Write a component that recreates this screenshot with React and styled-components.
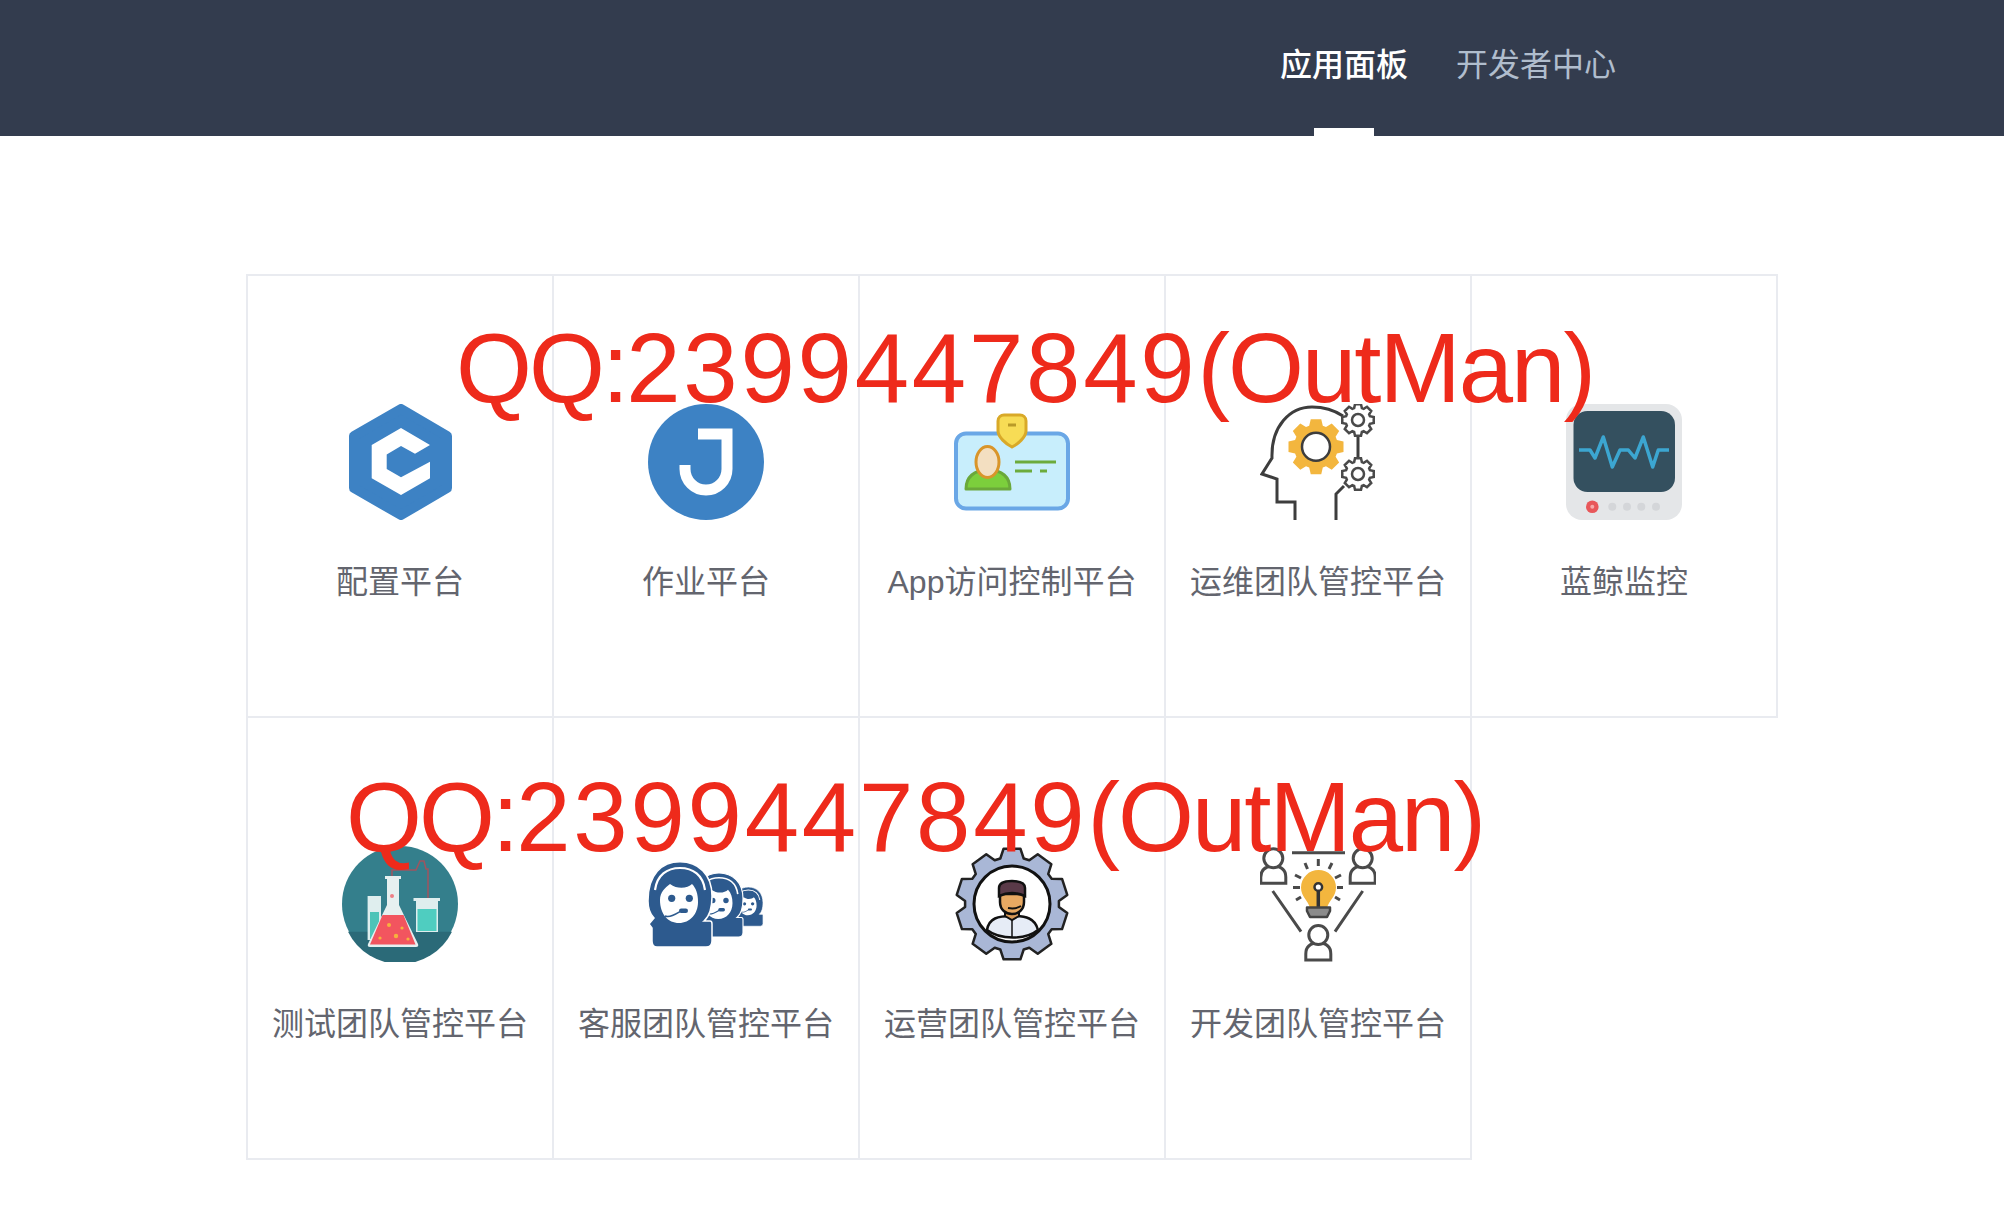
import React from "react";
import styled, { createGlobalStyle } from "styled-components";

const GlobalStyle = createGlobalStyle`
  html, body {
    margin: 0;
    padding: 0;
    background: #fff;
    font-family: "Liberation Sans", "Noto Sans CJK SC", sans-serif;
  }
`;

// builds a cog outline, used by several of the app icons
const gearPath = (cx, cy, outer, inner, teeth) => {
  const pts = [];
  const step = (Math.PI * 2) / teeth;
  for (let i = 0; i < teeth; i++) {
    const a = i * step - Math.PI / 2;
    [
      [-0.5, inner],
      [-0.3, outer],
      [0.3, outer],
      [0.5, inner],
    ].forEach(([off, r]) => {
      const t = a + off * step * 0.8;
      pts.push(`${(cx + Math.cos(t) * r).toFixed(2)} ${(cy + Math.sin(t) * r).toFixed(2)}`);
    });
  }
  return `M${pts.join("L")}Z`;
};

const Svg = ({ children }) => (
  <IconSvg viewBox="0 0 116 116" aria-hidden="true">
    {children}
  </IconSvg>
);

const ConfigIcon = () => (
  <Svg>
    <polygon
      points="59,5 105,32 105,84 59,111 12,84 12,32"
      fill="#3d82c4"
      stroke="#3d82c4"
      strokeWidth="10"
      strokeLinejoin="round"
    />
    <polygon
      points="59,24 88,41 73,49.7 59,42 44.7,50.5 44.7,65 59,73.3 88,57.7 88,74.3 59,91 29.7,74.3 29.7,41"
      fill="#fff"
    />
  </Svg>
);

const JobIcon = () => (
  <Svg>
    <circle cx="58" cy="58" r="58" fill="#3d82c4" />
    <path d="M50 30H79V65a21 21 0 0 1-42 0V61" fill="none" stroke="#fff" strokeWidth="11" />
  </Svg>
);

const CardIcon = () => (
  <Svg>
    <rect x="2" y="29.5" width="112" height="75" rx="10" fill="#c8eefc" stroke="#6aa7e6" strokeWidth="4" />
    <path
      d="M44 17c0-4 3-6 6-6h16c3 0 6 2 6 6v10c0 6-8 13-14 16-6-3-14-10-14-16z"
      fill="#f7dc55"
      stroke="#d9a928"
      strokeWidth="3"
    />
    <path d="M54 21h8" stroke="#b99a28" strokeWidth="3" />
    <path d="M12 85c0-12 8-19 22-19s22 7 22 19z" fill="#7ccf3c" stroke="#6aa83a" strokeWidth="3" strokeLinejoin="round" />
    <ellipse cx="33.5" cy="58" rx="11.5" ry="15.5" fill="#f3dfc1" stroke="#d9952a" strokeWidth="3" />
    <path d="M61 58h41M61 67h17M86 67h7" stroke="#6cab3c" strokeWidth="3" fill="none" />
  </Svg>
);

const OpsIcon = () => (
  <Svg>
    <path d={gearPath(56, 42.7, 28, 22, 8)} fill="#f3b63e" />
    <circle cx="56" cy="42.7" r="14" fill="#fff" stroke="#3d3d3d" strokeWidth="2.5" />
    <path
      d="M35 116V98H17V75L2 70 12 54C11 22 30 3 52 3c12 0 22 3 31 9M76 116V90l8-8"
      fill="none"
      stroke="#3d3d3d"
      strokeWidth="3"
    />
    <path d="M98 31V56" stroke="#3d3d3d" strokeWidth="3" />
    {[16, 70].map(cy => (
      <g key={cy}>
        <path d={gearPath(98, cy, 16, 12.5, 8)} fill="#fff" stroke="#4a4a4a" strokeWidth="2.5" />
        <circle cx="98" cy={cy} r="6" fill="#fff" stroke="#4a4a4a" strokeWidth="2.5" />
      </g>
    ))}
  </Svg>
);

const MonitorIcon = () => (
  <Svg>
    <rect width="116" height="116" rx="16" fill="#e4e6e8" />
    <rect x="7.5" y="7" width="101.5" height="81" rx="14" fill="#34505f" />
    <polyline
      points="13,46 24,46 29,54 37.3,33 46.3,63 54,46 62.3,46 69,54 77.3,33 86.7,63 92.3,46 103,46"
      fill="none"
      stroke="#3ca6d1"
      strokeWidth="3.5"
      strokeLinejoin="round"
    />
    <circle cx="26.3" cy="102.7" r="6.3" fill="#e8575a" />
    <circle cx="26.3" cy="102.7" r="2" fill="#f6a9a9" />
    {[46.3, 61, 75.3, 90].map(cx => (
      <circle key={cx} cx={cx} cy="102.7" r="4" fill="#d4d6d9" />
    ))}
  </Svg>
);

const FlaskIcon = () => (
  <Svg>
    <circle cx="58" cy="58" r="58" fill="#347f8c" />
    <path d="M6 85.7H110A58 58 0 0 1 6 85.7Z" fill="#2b6a78" />
    <path d="M50 30V24H74L78 15H82L84 23H86V54" fill="none" stroke="#a0545f" strokeWidth="1.5" />
    <rect x="25.6" y="50" width="13.4" height="44" fill="#dfeeee" />
    <rect x="28" y="66" width="9" height="27" fill="#4ec4b8" />
    <path d="M71.5 52H98V55H96V86H74V55H71.5Z" fill="#dfeeee" />
    <rect x="75.5" y="63" width="19" height="22" fill="#4fcdc0" />
    <path d="M43 30H59V33H57V59L76 98Q77 101 74 101H28Q25 101 26 98L45 59V33H43Z" fill="#e6f0f0" />
    <path d="M40.5 69H61.5L73.5 98.5H28Z" fill="#f2555f" />
    <g fill="#f7b13d">
      <circle cx="47" cy="79" r="2" />
      <circle cx="60" cy="82" r="1.6" />
      <circle cx="54" cy="90" r="2.2" />
      <circle cx="38" cy="92" r="1.6" />
      <circle cx="66" cy="93" r="1.6" />
    </g>
    <circle cx="50" cy="50" r="2" fill="#ee7f86" />
  </Svg>
);

const Agent = ({ transform }) => (
  <g transform={transform}>
    <path
      d="M0 55C0 28 14 15.7 32 15.7S64 28 64 50C64 60 62 70 56 75H62Q64 75 64 78V95Q64 101 58 101H9Q4 101 4 95V82L1 78 6 72C2 68 0 62 0 55Z"
      fill="#2d5a8e"
      stroke="#fff"
      strokeWidth="1.5"
    />
    <path d="M7 44C9 29 19 22 32 22S55 29 57 44" fill="none" stroke="#fff" strokeWidth="2.2" />
    <path d="M12 54C12 46 17 42 22 38 30 44 40 42 44 38 48 42 50 48 50 56 50 68 42 77 31 77S12 68 12 54Z" fill="#fff" />
    <circle cx="23.7" cy="52.3" r="3.6" fill="#2d5a8e" />
    <circle cx="41.3" cy="52.3" r="3.6" fill="#2d5a8e" />
    <path d="M17 70C22 72 28 68 33 65" fill="none" stroke="#2d5a8e" strokeWidth="1.6" />
    <rect x="31" y="62.5" width="9" height="4.5" rx="2.2" fill="#2d5a8e" />
  </g>
);

const ServiceIcon = () => (
  <Svg>
    <Agent transform="translate(85.6 33.8) scale(0.46)" />
    <Agent transform="translate(47 15.2) scale(0.75)" />
    <Agent />
  </Svg>
);

const OperationsIcon = () => (
  <Svg>
    <path d={gearPath(58, 58, 56, 47, 10)} fill="#a9b7d6" stroke="#222" strokeWidth="2.5" strokeLinejoin="round" />
    <circle cx="58" cy="58" r="38" fill="#fff" stroke="#111" strokeWidth="3" />
    <path d="M33 84C35 72 44 70 58 70S81 72 84 84C72 94 46 94 33 84Z" fill="#e6ecf6" stroke="#111" strokeWidth="2.5" />
    <path d="M58 72V92" stroke="#111" strokeWidth="1.5" />
    <path d="M51 62V70L58 74 65 70V62Z" fill="#d99a58" stroke="#111" strokeWidth="2" />
    <path d="M46 48V56C46 64 52 68 58 68S70 64 70 56V48Z" fill="#e8a962" stroke="#111" strokeWidth="2.5" />
    <path d="M45 50V42C45 37 50 35 58 35S71 37 71 42V50C62 46 54 46 45 50Z" fill="#5a3a48" stroke="#111" strokeWidth="2.5" />
    <path d="M54 62C60 63 64 62 67 60" fill="none" stroke="#111" strokeWidth="2" />
  </Svg>
);

const Member = ({ x, y }) => (
  <g transform={`translate(${x} ${y})`} fill="#fff" stroke="#4a4a4a" strokeWidth="3">
    <path d="M-12.5 25V19C-12.5 11-7 8 0 8S12.5 11 12.5 19V25Z" />
    <circle cx="0" cy="0" r="9.5" />
  </g>
);

const rays = [
  [58.3, 13, 58.3, 20],
  [45, 17, 47.5, 23],
  [72, 17, 69, 23],
  [35, 29, 41, 32],
  [81, 29, 75, 32],
  [33, 41.5, 40, 41.5],
  [77, 41.5, 83, 41.5],
  [36, 54, 41, 51],
  [80, 54, 75, 51],
];

const IdeaIcon = () => (
  <Svg>
    <Member x={13.3} y={12.3} />
    <Member x={102.7} y={12.3} />
    <Member x={58.3} y={89} />
    <path d="M32 6.7H85M12.7 45 41 85.7M102.7 45 75 85.7" stroke="#4a4a4a" strokeWidth="3" fill="none" />
    {rays.map(([x1, y1, x2, y2]) => (
      <line key={`${x1}-${y1}`} x1={x1} y1={y1} x2={x2} y2={y2} stroke="#4a4a4a" strokeWidth="3" />
    ))}
    <path d="M50 62C48 54 41 51 41 41.5A17.5 17.5 0 0 1 76 41.5C76 51 69 54 67 62Z" fill="#f3b63e" />
    <path d="M58.3 45V61" stroke="#333" strokeWidth="3.5" />
    <circle cx="58.3" cy="41" r="3.8" fill="#fff" stroke="#333" strokeWidth="2.5" />
    <path d="M47 61.5H70V65L67 71H50L47 65Z" fill="#8b8b8b" stroke="#444" strokeWidth="2.5" strokeLinejoin="round" />
  </Svg>
);

const apps = [
  { name: "配置平台", Icon: ConfigIcon },
  { name: "作业平台", Icon: JobIcon },
  { name: "App访问控制平台", Icon: CardIcon },
  { name: "运维团队管控平台", Icon: OpsIcon },
  { name: "蓝鲸监控", Icon: MonitorIcon },
  { name: "测试团队管控平台", Icon: FlaskIcon },
  { name: "客服团队管控平台", Icon: ServiceIcon },
  { name: "运营团队管控平台", Icon: OperationsIcon },
  { name: "开发团队管控平台", Icon: IdeaIcon },
];

const WatermarkText = ({ left, top }) => (
  <Watermark $left={left} $top={top}>
    <Stamp $track={-3}>QQ:</Stamp>
    <Stamp $track={2.8}>2399447849</Stamp>
    <Stamp $track={-2}>(OutMan)</Stamp>
  </Watermark>
);

function App() {
  return (
    <Page>
      <GlobalStyle />
      <Header>
        <Nav>
          <NavItem $active>应用面板</NavItem>
          <NavItem>开发者中心</NavItem>
        </Nav>
      </Header>
      <AppGrid>
        {apps.map(({ name, Icon }) => (
          <AppCell key={name}>
            <Icon />
            <AppName>{name}</AppName>
          </AppCell>
        ))}
      </AppGrid>
      <WatermarkText left={456} top={320} />
      <WatermarkText left={346} top={769} />
    </Page>
  );
}

const Page = styled("div")`
  position: relative;
  min-height: 1216px;
  overflow: hidden;
`;

const Header = styled("header")`
  display: flex;
  height: 136px;
  background-color: #333c4e;
`;

const Nav = styled("nav")`
  display: flex;
  gap: 48px;
  margin-left: 1280px;
`;

const NavItem = styled("a")`
  position: relative;
  font-size: 32px;
  line-height: 130px;
  font-weight: ${props => (props.$active ? 500 : 400)};
  color: ${props => (props.$active ? "#fff" : "#b0bdcd")};

  &::after {
    content: "";
    display: ${props => (props.$active ? "block" : "none")};
    position: absolute;
    left: 34px;
    right: 34px;
    top: 128px;
    height: 8px;
    background-color: #fff;
  }
`;

const AppGrid = styled("div")`
  display: grid;
  grid-template-columns: repeat(5, 306px);
  grid-auto-rows: 442px;
  margin: 138px 0 0 246px;
`;

const AppCell = styled("div")`
  display: flex;
  flex-direction: column;
  align-items: center;
  margin: 0 -2px -2px 0;
  padding-top: 128px;
  border: 2px solid #e9ebf0;
`;

const IconSvg = styled("svg")`
  display: block;
  flex: none;
  width: 116px;
  height: 116px;
`;

const AppName = styled("div")`
  margin-top: 42px;
  font-size: 32px;
  line-height: 40px;
  color: #63656e;
  white-space: nowrap;
`;

const Watermark = styled("div")`
  position: absolute;
  left: ${props => props.$left}px;
  top: ${props => props.$top}px;
  font-family: "Liberation Sans", sans-serif;
  font-size: 97.7px;
  line-height: 1;
  color: #ee2a1b;
  white-space: nowrap;
`;

const Stamp = styled("span")`
  letter-spacing: ${props => props.$track}px;
`;

export default App;
